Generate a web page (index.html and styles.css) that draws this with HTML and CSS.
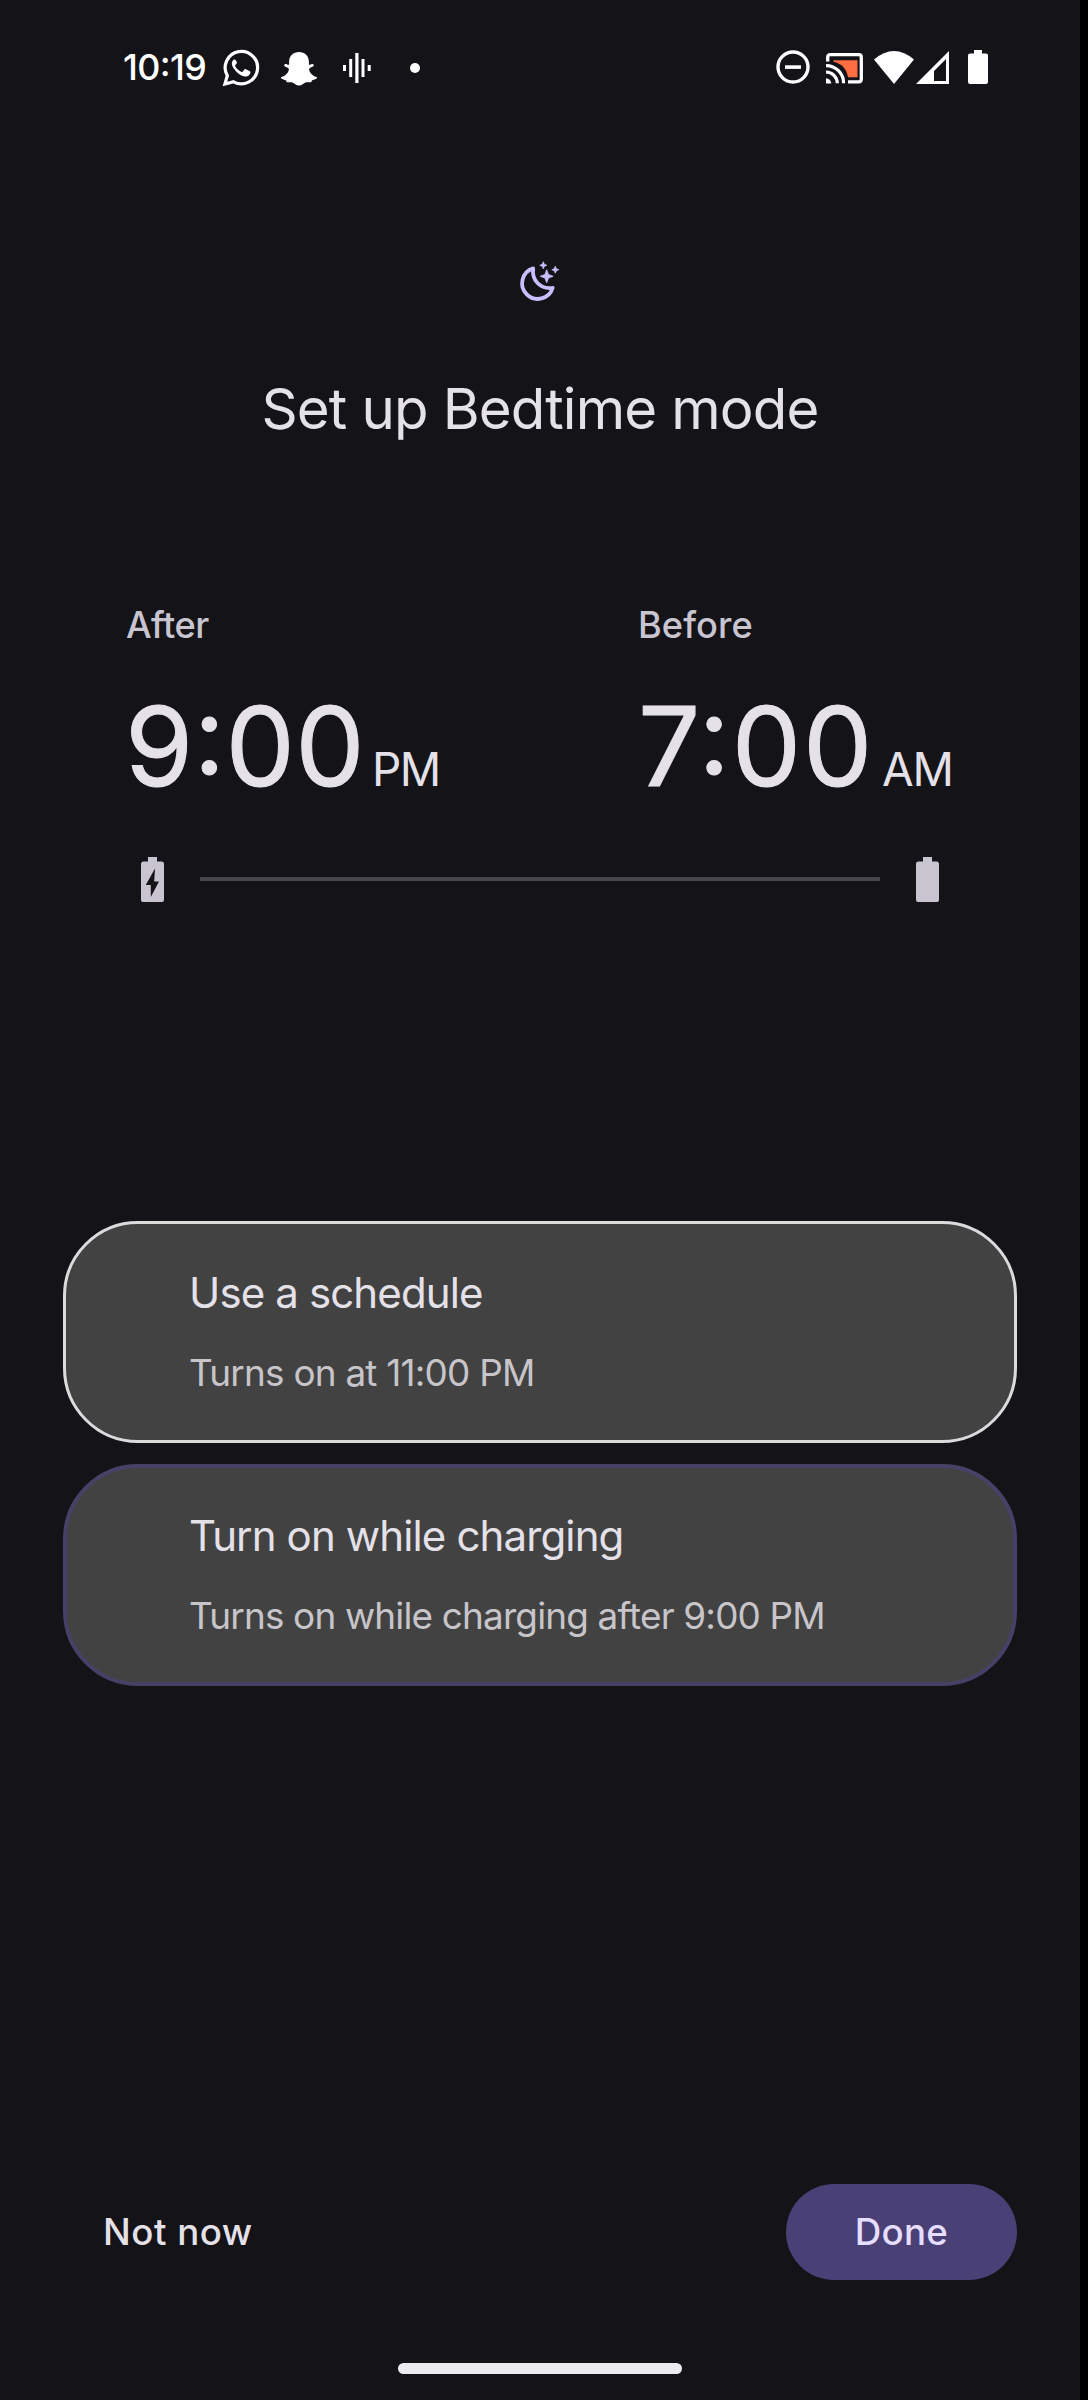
FILE: index.html
```html
<!DOCTYPE html>
<html lang="en">
<head>
<meta charset="utf-8">
<title>Set up Bedtime mode</title>
<link rel="stylesheet" href="styles.css">
</head>
<body>
<div class="screen">
  <header class="status">
    <div class="status-left">
      <span class="clock">10:19</span>
      <svg class="whatsapp" width="36" height="36" viewBox="0 0 36 36"><path d="M1.9 34.1 4.3 25.6A16.2 16.2 0 1 1 10.6 31.8Z" fill="none" stroke="#fff" stroke-width="3.2" stroke-linejoin="miter"/><path d="M12.6 10.1c-.5-.9-1.400-.8-2.200-.2-2.300 2-1.900 5.100.4 8.500 3 4.300 6.500 7 10.600 8 3 .7 5.500-1 6-3.700.1-.8-.2-1.200-.9-1.600l-3.600-1.800c-.8-.4-1.200-.2-1.700.4l-1.400 1.700c-.5.6-.9.600-1.600.3-2.600-1.200-4.500-2.900-5.900-5.300-.3-.6-.3-.9.1-1.400l1.200-1.500c.4-.5.400-.8.200-1.400Z" fill="#fff"/></svg>
      <svg class="ghost" width="36" height="34" viewBox="0 0 36 34"><path d="M18 0C23.800 0 27.800 4 27.900 9.500V12.800C29.300 13.200 30.600 11.700 32 12.200 33.500 12.900 32.800 14.200 31.500 14.800 29.800 15.600 28.200 15.900 28.100 17.400 28.300 20.300 31.800 24 35.500 25 36.300 25.300 36.200 26.200 35.400 26.700 33.800 27.700 31.800 27.800 31 28.400 30.500 29 30.700 30 29.900 30.200 28.300 30.500 26.500 29.700 24.500 30.500 22.600 31.300 21 33.600 18 33.600S13.400 31.300 11.500 30.500C9.500 29.700 7.700 30.500 6.100 30.200 5.300 30 5.500 29 5 28.400 4.200 27.800 2.200 27.700.6 26.700-.2 26.200-.3 25.300.5 25 4.200 24 7.700 20.300 7.900 17.400 7.800 15.900 6.200 15.600 4.500 14.800 3.200 14.200 2.500 12.900 4 12.200 5.400 11.700 6.700 13.200 8.100 12.800V9.500C8.200 4 12.200 0 18 0Z" fill="#fff"/></svg>
      <svg class="wave" width="28" height="30" viewBox="0 0 28 30" fill="#fff"><path d="M0 12h3v6H0zM6.200 6h3v18h-3zM12.300 0h3.200v30h-3.200zM18.500 6h3v18h-3zM24.700 12h3v6h-3z"/></svg>
      <span class="dot"></span>
    </div>
    <div class="status-right">
      <svg width="34" height="34" viewBox="0 0 34 34"><circle cx="17" cy="17" r="15" fill="none" stroke="#fff" stroke-width="3.400"/><path d="M9 15.300h16v3.600H9z" fill="#fff"/></svg>
      <svg class="cast" width="37" height="31" viewBox="0 0 37 31"><path d="M7.500 7.200H31.500V24.200H22C20.500 15.500 15.500 10.500 7.500 8.800Z" fill="#ff6e40"/><path d="M1.700 8.500V4.200Q1.700 1.700 4.200 1.700H32.800Q35.300 1.700 35.300 4.200V26.300Q35.300 28.800 32.800 28.800H22" fill="none" stroke="#fff" stroke-width="3.300"/><path d="M0 12.600A17.500 17.500 0 0 1 17.600 30.200M0 19A11.300 11.300 0 0 1 11.300 30.200" fill="none" stroke="#fff" stroke-width="3.200"/><path d="M0 25.200A5.200 5.200 0 0 1 5.200 30.400H0Z" fill="#fff"/></svg>
      <svg class="wifi" width="40" height="33" viewBox="0 0 40 33"><path d="M0 8.500Q20-8.500 40 8.500L20 33Z" fill="#fff"/></svg>
      <svg class="signal" width="33" height="33" viewBox="0 0 33 33"><path d="M33 0V33H0ZM30 8 18 20V30H30Z" fill="#fff" fill-rule="evenodd"/></svg>
      <svg class="level" width="20" height="34" viewBox="0 0 20 34"><path d="M6 0h8v3.500h4q2 0 2 2V32q0 2-2 2H2q-2 0-2-2V5.500q0-2 2-2h4Z" fill="#fff"/></svg>
    </div>
  </header>

  <main>
    <svg class="moon" width="40" height="40" viewBox="0 0 40 40"><path d="M13.200 6.400A15.600 15.600 0 1 0 32.700 25.800C20.500 27.500 11.500 18.500 13.200 6.400Z" fill="none" stroke="#cabeff" stroke-width="3.800" stroke-linejoin="round"/><path d="M26.700 7.800 28.500 12.500 33.200 14.300 28.500 16.100 26.700 20.800 24.900 16.100 20.200 14.300 24.900 12.500ZM23.300-.2 24.300 2.300 26.800 3.300 24.300 4.300 23.300 6.800 22.300 4.300 19.800 3.300 22.300 2.300ZM35.300 4.200 36.300 6.700 38.800 7.700 36.300 8.700 35.300 11.200 34.300 8.700 31.800 7.700 34.300 6.700Z" fill="#cabeff" stroke="#cabeff" stroke-width=".8" stroke-linejoin="round"/></svg>
    <h1 class="title">Set up Bedtime mode</h1>

    <section class="times">
      <div class="slot">
        <div class="label after">After</div>
        <div class="time"><span class="digits">9:00</span><span class="period">PM</span></div>
      </div>
      <div class="slot">
        <div class="label">Before</div>
        <div class="time"><span class="digits seven">7:00</span><span class="period am">AM</span></div>
      </div>
    </section>

    <div class="range">
      <svg width="23" height="45" viewBox="0 0 23 45"><path d="M7 0h9v4.500h4.500q2.500 0 2.500 2.500V43q0 2-2 2H2q-2 0-2-2V7q0-2.500 2.500-2.500H7ZM14 11.500 4.800 28H9.800V40L18 24.500H13.200Z" fill="#c8c5d0" fill-rule="evenodd"/></svg>
      <div class="track"></div>
      <svg width="23" height="45" viewBox="0 0 23 45"><path d="M7 0h9v4.500h4.500q2.500 0 2.500 2.500V43q0 2-2 2H2q-2 0-2-2V7q0-2.500 2.500-2.500H7Z" fill="#c8c5d0"/></svg>
    </div>

    <section class="options">
      <div class="option">
        <div class="option-title">Use a schedule</div>
        <div class="option-sub narrow">Turns on at 11:00 PM</div>
      </div>
      <div class="option selected">
        <div class="option-title">Turn on while charging</div>
        <div class="option-sub">Turns on while charging after 9:00 PM</div>
      </div>
    </section>
  </main>

  <footer class="actions">
    <button class="skip">Not now</button>
    <button class="done">Done</button>
  </footer>
  <div class="home"></div>
</div>
</body>
</html>
```
FILE: styles.css
```css
* { box-sizing: border-box; }
body {
  margin: 0;
  background: #000;
  font-family: Inter, "Liberation Sans", sans-serif;
}
svg { display: block; flex: none; overflow: visible; }
.screen {
  width: 1080px;
  height: 2400px;
  background: #141318;
  color: #e5e1e9;
  display: flex;
  flex-direction: column;
}
.status {
  height: 134px;
  padding: 0 92px 0 123px;
  display: flex;
  align-items: center;
  justify-content: space-between;
}
.status-left, .status-right { display: flex; align-items: center; }
.clock {
  width: 100px;
  font-size: 35.800px;
  font-weight: 500;
  line-height: 44px;
  letter-spacing: -.6px;
  color: #fff;
}
.clock, .digits { font-feature-settings: "case"; }
.whatsapp { margin-top: 2px; }
.ghost { margin: 3px 0 0 22px; }
.wave { margin: 2px 0 0 26px; }
.dot {
  width: 10px;
  height: 10px;
  margin: 2px 0 0 39px;
  border-radius: 50%;
  background: #fff;
}
.cast { margin: 2px 0 0 16px; }
.wifi { margin-left: 11px; }
.signal { margin-left: 2px; }
.level { margin-left: 19px; }

main { display: flex; flex-direction: column; }
.moon { margin: 128px 0 0 520px; }
.title {
  margin: 71px 0 0;
  text-align: center;
  font-size: 56.400px;
  font-weight: 400;
  line-height: 72px;
  letter-spacing: -.84px;
}
.times {
  display: grid;
  grid-template-columns: 513px 1fr;
  margin: 158px 0 0 125px;
}
.label {
  font-size: 36.200px;
  font-weight: 500;
  line-height: 44px;
  letter-spacing: .1px;
  color: #c8c5d0;
}
.after { margin-left: 1px; letter-spacing: -.5px; }
.time {
  height: 120px;
  margin-top: 39px;
  display: flex;
  align-items: baseline;
  line-height: 120px;
}
.digits {
  width: 247px;
  font-size: 110px;
  letter-spacing: .3px;
  -webkit-text-stroke: 1px #e5e1e9;
}
.seven { width: 244px; letter-spacing: 1.800px; }
.period { font-size: 45.900px; letter-spacing: -1.600px; }
.am { letter-spacing: -1.160px; }
.range {
  display: flex;
  align-items: center;
  justify-content: space-between;
  margin: 51px 141px 0;
}
.track { width: 680px; height: 4px; margin-top: -1px; background: #47464c; }
.options {
  display: flex;
  flex-direction: column;
  gap: 21px;
  margin: 319px 63px 0;
}
.option {
  height: 222px;
  padding: 42px 123px 0;
  border: 3px solid #dcdbdc;
  border-radius: 75px;
  background: #424242;
}
.selected { padding: 41px 122px 0; border: 4px solid #484066; }
.option-title {
  font-size: 42px;
  line-height: 54px;
  letter-spacing: -.87px;
  white-space: nowrap;
}
.option-sub {
  margin-top: 29px;
  font-size: 36.900px;
  line-height: 48px;
  letter-spacing: -.82px;
  color: #c8c5ca;
  white-space: nowrap;
}
.narrow { letter-spacing: -.77px; }
.actions {
  display: flex;
  align-items: center;
  justify-content: space-between;
  margin: 498px 63px 0 103px;
}
.actions button {
  height: 96px;
  padding: 0;
  border: 0;
  font: 500 36.700px/44px Inter, "Liberation Sans", sans-serif;
}
.skip { background: none; color: #e5e1e9; letter-spacing: .5px; }
.actions .done {
  width: 231px;
  border-radius: 48px;
  background: #494076;
  color: #e6deff;
  letter-spacing: .3px;
}
.home {
  width: 284px;
  height: 11px;
  margin: 83px auto 0;
  border-radius: 6px;
  background: #ecebee;
}
```
